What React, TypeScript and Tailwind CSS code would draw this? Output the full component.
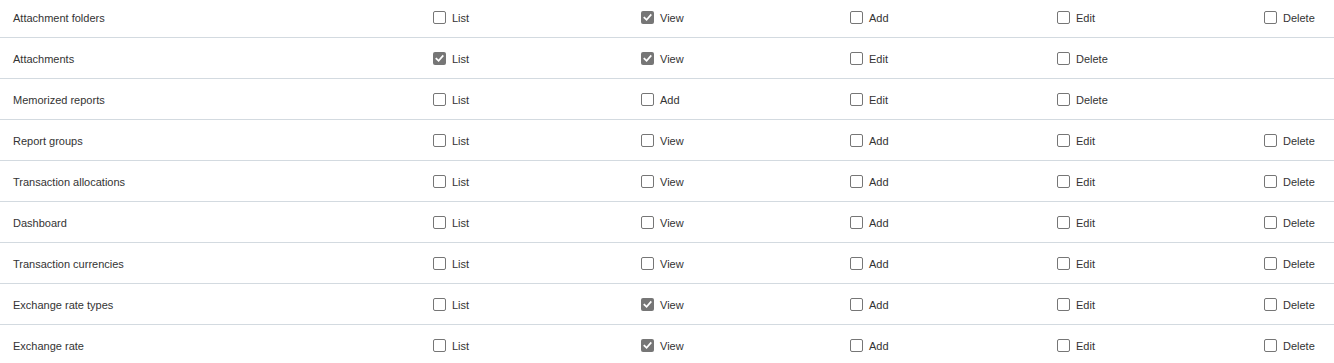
import React from "react";

type Cell = { label: string; checked?: boolean } | null;

const rows: { name: string; cells: Cell[] }[] = [
  { name: "Attachment folders", cells: [{ label: "List" }, { label: "View", checked: true }, { label: "Add" }, { label: "Edit" }, { label: "Delete" }] },
  { name: "Attachments", cells: [{ label: "List", checked: true }, { label: "View", checked: true }, { label: "Edit" }, { label: "Delete" }, null] },
  { name: "Memorized reports", cells: [{ label: "List" }, { label: "Add" }, { label: "Edit" }, { label: "Delete" }, null] },
  { name: "Report groups", cells: [{ label: "List" }, { label: "View" }, { label: "Add" }, { label: "Edit" }, { label: "Delete" }] },
  { name: "Transaction allocations", cells: [{ label: "List" }, { label: "View" }, { label: "Add" }, { label: "Edit" }, { label: "Delete" }] },
  { name: "Dashboard", cells: [{ label: "List" }, { label: "View" }, { label: "Add" }, { label: "Edit" }, { label: "Delete" }] },
  { name: "Transaction currencies", cells: [{ label: "List" }, { label: "View" }, { label: "Add" }, { label: "Edit" }, { label: "Delete" }] },
  { name: "Exchange rate types", cells: [{ label: "List" }, { label: "View", checked: true }, { label: "Add" }, { label: "Edit" }, { label: "Delete" }] },
  { name: "Exchange rate", cells: [{ label: "List" }, { label: "View", checked: true }, { label: "Add" }, { label: "Edit" }, { label: "Delete" }] },
];

function Box({ checked }: { checked?: boolean }) {
  if (checked) {
    return (
      <span className="flex h-[13px] w-[13px] shrink-0 items-center justify-center rounded-[2px] bg-[#767676]">
        <svg width="9" height="9" viewBox="0 0 10 10" fill="none">
          <path d="M1.5 5.2 L4 7.6 L8.6 2.2" stroke="white" strokeWidth="1.9" strokeLinecap="square" />
        </svg>
      </span>
    );
  }
  return <span className="block h-[13px] w-[13px] shrink-0 rounded-[2px] border border-[#767676] bg-white" />;
}

export default function App() {
  return (
    <div className="w-[1334px] h-[363px] overflow-hidden bg-white text-[11px] text-[#333333]" style={{ fontFamily: '"Liberation Sans", Arial, sans-serif' }}>
      <div className="-mt-[3px]">
        {rows.map((r, i) => (
          <div
            key={i}
            className="grid h-[41px] grid-cols-[433px_208px_209px_207px_207px_1fr] border-b border-[#d3dae0] items-center"
          >
            <div className="pl-[13px] pt-[2px]">{r.name}</div>
            {r.cells.map((c, j) => (
              <div key={j} className="flex items-center">
                {c && (
                  <>
                    <Box checked={c.checked} />
                    <span className="ml-[6px] pt-[3px] text-[#333333]">{c.label}</span>
                  </>
                )}
              </div>
            ))}
          </div>
        ))}
      </div>
    </div>
  );
}
